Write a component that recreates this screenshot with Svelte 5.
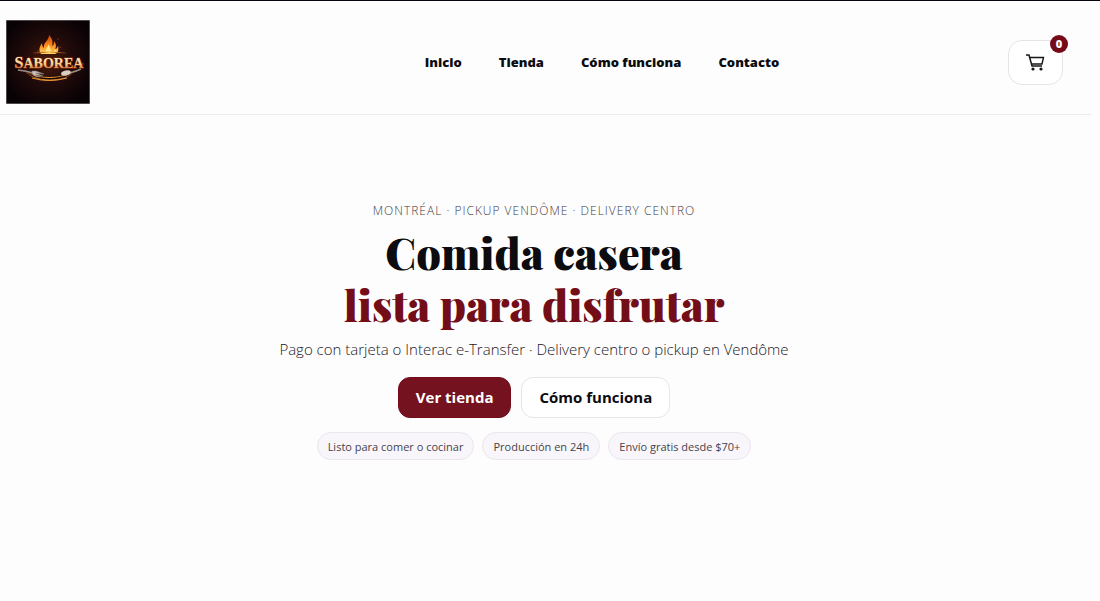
<script lang="ts">
	let cartCount = $state(0);

	const links = [
		{ label: 'Inicio', href: '#inicio' },
		{ label: 'Tienda', href: '#tienda' },
		{ label: 'Cómo funciona', href: '#como-funciona' },
		{ label: 'Contacto', href: '#contacto' }
	];

	const pills = ['Listo para comer o cocinar', 'Producción en 24h', 'Envío gratis desde $70+'];
</script>

<div class="page">
	<header>
		<a class="brand" href="#inicio" aria-label="Saborea">
			<svg viewBox="0 0 84 84" width="84" height="84">
				<defs>
					<radialGradient id="glow" cx="50%" cy="48%" r="58%">
						<stop offset="0" stop-color="#4a1a0c" />
						<stop offset="0.5" stop-color="#210b0a" />
						<stop offset="1" stop-color="#090205" />
					</radialGradient>
					<linearGradient id="flame" x1="0" y1="0" x2="0" y2="1">
						<stop offset="0" stop-color="#c2410c" />
						<stop offset="0.5" stop-color="#f98318" />
						<stop offset="1" stop-color="#ffd764" />
					</linearGradient>
					<linearGradient id="letters" x1="0" y1="0" x2="0" y2="1">
						<stop offset="0.2" stop-color="#fff0c4" />
						<stop offset="0.6" stop-color="#f8cf94" />
						<stop offset="0.9" stop-color="#d2662a" />
					</linearGradient>
					<linearGradient id="rim" x1="0" y1="0" x2="1" y2="0">
						<stop offset="0" stop-color="#6d260b" />
						<stop offset="0.5" stop-color="#f3a13a" />
						<stop offset="1" stop-color="#6d260b" />
					</linearGradient>
				</defs>
				<rect width="84" height="84" fill="#918c8f" />
				<rect x="0.5" y="0.5" width="83" height="83" fill="url(#glow)" />
				<path
					d="M35 34c-3-4-1-8 1-11 0 3 1 4 2 5-1-6 5-7 5-13 4 4 4 8 3 11 2-1 2-3 2-5 3 4 2 6 1 8 2 0 2-2 3-3 1 4 0 7-3 8z"
					fill="url(#flame)"
				/>
				<path
					d="M40 33c-1-3 1-5 3-9 0 3 3 6 1 9m3 0c2-2 2-3 2-5 1 3 1 4 0 5"
					fill="#ffe88c"
				/>
				<path d="M27 33q16-2 33 0" fill="none" stroke="url(#rim)" />
				<path d="M18 50c9 13 42 14 51 0-13 10-38 10-51 0z" fill="#160606" stroke="url(#rim)" />
				<path d="M26 58q17 5 35 0" fill="none" stroke="#f09a34" />
				<path d="M12 50q9 1 15 3" fill="none" stroke="#9a8c84" stroke-width="1.5" />
				<path
					d="M26 51l4 0 8 3-8-1 7 3-8-1 5 2c-4 0-7-1-8-4z"
					fill="#c9bdb1"
					stroke="#8d7f78"
					stroke-width="0.5"
				/>
				<path d="M75 49q-6 3-12 4" fill="none" stroke="#9a8c84" stroke-width="1.5" />
				<ellipse cx="60" cy="53" rx="5" ry="2.5" transform="rotate(-14 60 53)" fill="#d9cec0" />
				<text
					x="43"
					y="48"
					text-anchor="middle"
					font-size="14"
					font-weight="700"
					stroke="#8a300d"
					stroke-width="1"
					paint-order="stroke"
					fill="url(#letters)"><tspan font-size="16">S</tspan>ABOREA</text
				>
				<g fill="#d9571a">
					<circle cx="32" cy="31" r="0.6" />
					<circle cx="54" cy="27" r="0.6" />
					<circle cx="52" cy="19" r="0.5" />
					<circle cx="11" cy="47" r="0.7" />
					<circle cx="77" cy="44" r="0.7" />
				</g>
			</svg>
		</a>

		<nav aria-label="Principal">
			{#each links as link}
				<a href={link.href}>{link.label}</a>
			{/each}
		</nav>

		<button class="cart" type="button" aria-label="Carrito">
			<svg viewBox="0 0 20 20" width="20" height="20" fill="none" stroke="#17141a">
				<path d="M1 3h3l3 11h10" stroke-width="1.5" />
				<path d="M5 5.5h13.5l-1.5 6.5H7" stroke-width="1.4" />
				<circle cx="8" cy="17" r="1.6" fill="#17141a" stroke="none" />
				<circle cx="16" cy="17" r="1.6" fill="#17141a" stroke="none" />
			</svg>
			<span class="badge">{cartCount}</span>
		</button>
	</header>

	<main>
		<p class="eyebrow">Montréal · Pickup Vendôme · Delivery centro</p>
		<h1>
			<span>Comida casera</span>
			<span class="accent">lista para disfrutar</span>
		</h1>
		<p class="lead">Pago con tarjeta o Interac e-Transfer · Delivery centro o pickup en Vendôme</p>
		<div class="actions">
			<a class="btn primary" href="#tienda">Ver tienda</a>
			<a class="btn" href="#como-funciona">Cómo funciona</a>
		</div>
		<ul>
			{#each pills as pill}
				<li>{pill}</li>
			{/each}
		</ul>
	</main>
</div>

<style>
	:global(body) {
		background: #fdfdfd;
	}

	.page {
		border-top: 1px solid #09030f;
		color: #0b0b10;
		font-family: 'Open Sans', 'Noto Sans', sans-serif;
	}

	a {
		color: inherit;
		text-decoration: none;
	}

	header {
		display: flex;
		align-items: center;
		justify-content: space-between;
		margin-right: 9px;
		padding: 19px 28px 10px 6px;
		border-bottom: 1px solid #ebe9ed;
	}

	.brand {
		flex: 0 0 190px;
	}

	.brand svg {
		display: block;
	}

	.brand text {
		font-family: 'Liberation Serif', serif;
	}

	nav {
		display: flex;
		gap: 37px;
		font-size: 13px;
		font-weight: 800;
		line-height: 20px;
	}

	.cart {
		position: relative;
		display: flex;
		align-items: center;
		justify-content: center;
		width: 55px;
		height: 45px;
		padding: 0;
		border: 1px solid #e7e3e9;
		border-radius: 14px;
		background: #fff;
		font-family: inherit;
	}

	.badge {
		position: absolute;
		top: -6px;
		right: -6px;
		width: 18px;
		height: 18px;
		border-radius: 50%;
		background: #750b19;
		color: #fff;
		font-size: 11px;
		font-weight: 800;
		line-height: 18px;
	}

	main {
		display: flex;
		flex-direction: column;
		align-items: center;
		padding: 86px 32px 86px 0;
		text-align: center;
	}

	p {
		margin: 0;
	}

	.eyebrow {
		color: #3f3b44;
		font-size: 12px;
		font-weight: 300;
		letter-spacing: 1px;
		line-height: 20px;
		text-transform: uppercase;
	}

	h1 {
		margin: 5px 0 0;
		font-family: 'Playfair Display', 'Liberation Serif', serif;
		font-size: 43px;
		font-weight: 900;
		line-height: 52px;
	}

	h1 span {
		display: block;
	}

	.accent {
		color: #730d18;
	}

	.lead {
		margin-top: 7px;
		color: #1c191f;
		font-size: 15px;
		font-weight: 300;
		line-height: 24px;
	}

	.actions {
		display: flex;
		flex-wrap: wrap;
		justify-content: center;
		gap: 10px;
		margin-top: 16px;
	}

	.btn {
		padding: 8px 17px;
		border: 1px solid #e7e3e9;
		border-radius: 12px;
		background: #fff;
		font-size: 15px;
		font-weight: 700;
		line-height: 23px;
	}

	.btn.primary {
		border-color: #750b19;
		background: #74131f;
		color: #fff;
	}

	ul {
		display: flex;
		flex-wrap: wrap;
		justify-content: center;
		gap: 8px;
		margin: 14px 0 0;
		padding: 0;
		list-style: none;
	}

	li {
		padding: 4px 10px 2px;
		border: 1px solid #ebe5ed;
		border-radius: 14px;
		background: #f8f6fa;
		color: #47434b;
		font-size: 11px;
		line-height: 20px;
	}
</style>
